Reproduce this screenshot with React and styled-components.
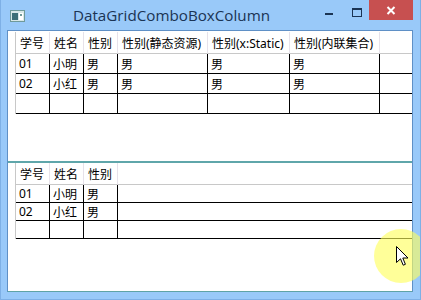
import React from 'react';
import styled, { createGlobalStyle } from 'styled-components';

const GlobalStyle = createGlobalStyle`
  html, body {
    margin: 0;
    padding: 0;
    background: #ffffff;
  }
`;

const Window = styled.div`
  position: relative;
  width: 421px;
  height: 300px;
  box-sizing: border-box;
  background: #99c9f9;
  border: 1px solid #7eb0e6;
  border-top: 0;
  padding: 0 7px 7px 6px;
  display: flex;
  flex-direction: column;
  overflow: hidden;
`;

const TitleBar = styled.div`
  height: 30px;
  display: flex;
  align-items: flex-start;
  flex-shrink: 0;
`;

const AppIcon = styled.svg`
  margin: 10px 0 0 3px;
  flex-shrink: 0;
`;

const Title = styled.div`
  margin: 5px 0 0 48px;
  font-family: "Open Sans", "Noto Sans", sans-serif;
  font-size: 15.2px;
  color: #1b3454;
  white-space: nowrap;
`;

const Controls = styled.div`
  margin-left: auto;
  display: flex;
  align-items: flex-start;
`;

const MinGlyph = styled.div`
  width: 8px;
  height: 2px;
  margin-top: 13px;
  background: #1b3454;
`;

const MaxGlyph = styled.div`
  width: 10px;
  height: 9px;
  margin: 8px 0 0 19px;
  box-sizing: border-box;
  border: 1px solid #1b3454;
  border-top-width: 2px;
`;

const CloseButton = styled.div`
  width: 44px;
  height: 20px;
  margin-left: 7px;
  background: #c75050;
  display: flex;
  align-items: center;
  justify-content: center;
`;

const Client = styled.div`
  flex: 1;
  background: #ffffff;
  border: 1px solid #5f90c6;
  border-bottom-color: #5fa3a6;
  display: flex;
  flex-direction: column;
  min-height: 0;
`;

const Pane = styled.div`
  height: ${p => p.$h}px;
  flex-shrink: 0;
  padding-top: ${p => p.$top || 0}px;
  box-sizing: border-box;
`;

const Splitter = styled.div`
  height: 2px;
  background: #5fa6aa;
  flex-shrink: 0;
`;

const Grid = styled.div`
  display: flex;
  flex-direction: column;
  font-family: "Noto Sans", "Noto Sans CJK SC", sans-serif;
  font-size: 12px;
  color: #000000;
`;

const Row = styled.div`
  display: flex;
  height: ${p => p.$h}px;
`;

const RowHeader = styled.div`
  width: 8px;
  flex-shrink: 0;
  box-sizing: border-box;
  border-right: 1px solid #c8c8c8;
`;

const HeaderCell = styled.div`
  width: ${p => p.$w}px;
  flex-shrink: 0;
  box-sizing: border-box;
  border-right: 1px solid #e6e2ea;
  border-bottom: 1px solid #c8c8c8;
  padding: 0 0 0 4px;
  display: flex;
  align-items: center;
  white-space: nowrap;
  overflow: hidden;
`;

const HeaderFiller = styled.div`
  flex: 1;
  border-bottom: 1px solid #c8c8c8;
`;

const Cell = styled.div`
  width: ${p => p.$w}px;
  flex-shrink: 0;
  box-sizing: border-box;
  border-right: 1px solid #000000;
  border-bottom: 1px solid #000000;
  padding: 0 0 0 3px;
  display: flex;
  align-items: center;
  white-space: nowrap;
  overflow: hidden;
`;

const Filler = styled.div`
  flex: 1;
  border-bottom: 1px solid #000000;
`;

const Highlight = styled.div`
  position: absolute;
  left: 373px;
  top: 229px;
  width: 54px;
  height: 54px;
  border-radius: 50%;
  background: rgba(255, 255, 90, 0.62);
  pointer-events: none;
`;

const Cursor = styled.svg`
  position: absolute;
  left: 395px;
  top: 246px;
`;

const DataGrid = ({ columns, rows, headerH, rowH }) => (
  <Grid>
    <Row $h={headerH}>
      <RowHeader />
      {columns.map(c => (
        <HeaderCell key={c.title} $w={c.width}>{c.title}</HeaderCell>
      ))}
      <HeaderFiller />
    </Row>
    {rows.map((r, i) => (
      <Row key={i} $h={rowH}>
        <RowHeader />
        {columns.map((c, j) => (
          <Cell key={j} $w={c.width}>{r[j] || ''}</Cell>
        ))}
        <Filler />
      </Row>
    ))}
  </Grid>
);

const topColumns = [
  { title: '学号', width: 34 },
  { title: '姓名', width: 34 },
  { title: '性别', width: 34 },
  { title: '性别(静态资源)', width: 90 },
  { title: '性别(x:Static)', width: 82 },
  { title: '性别(内联集合)', width: 90 },
];

const topRows = [
  ['01', '小明', '男', '男', '男', '男'],
  ['02', '小红', '男', '男', '男', '男'],
  [],
];

const bottomColumns = topColumns.slice(0, 3);

const bottomRows = [
  ['01', '小明', '男'],
  ['02', '小红', '男'],
  [],
];

const App = () => (
  <>
    <GlobalStyle />
    <Window>
      <TitleBar>
        <AppIcon width="15" height="12" viewBox="0 0 15 12">
          <rect x="0.5" y="0.5" width="14" height="11" fill="#d8e8e8" stroke="#6f9a9a" />
          <rect x="2" y="3" width="6" height="7" fill="#3d6f78" />
          <rect x="9" y="3" width="4" height="7" fill="#ffffff" />
          <rect x="10" y="4" width="2" height="2" fill="#6f9a9a" />
        </AppIcon>
        <Title>DataGridComboBoxColumn</Title>
        <Controls>
          <MinGlyph />
          <MaxGlyph />
          <CloseButton>
            <svg width="10" height="9" viewBox="0 0 10 9">
              <path d="M1.5 1 L8.5 8 M8.5 1 L1.5 8" stroke="#ffffff" strokeWidth="2" />
            </svg>
          </CloseButton>
        </Controls>
      </TitleBar>
      <Client>
        <Pane $h={130} $top={1}>
          <DataGrid columns={topColumns} rows={topRows} headerH={22} rowH={20} />
        </Pane>
        <Splitter />
        <Pane $h={126}>
          <DataGrid columns={bottomColumns} rows={bottomRows} headerH={22} rowH={18} />
        </Pane>
      </Client>
      <Highlight />
      <Cursor width="13" height="21" viewBox="0 0 13 21">
        <path d="M0.5 0.5 L0.5 16.5 L4.5 12.8 L7.2 19.2 L9.4 18.3 L6.8 12 L12 12 Z" fill="#ffffff" stroke="#000000" strokeWidth="1" />
      </Cursor>
    </Window>
  </>
);

export default App;
